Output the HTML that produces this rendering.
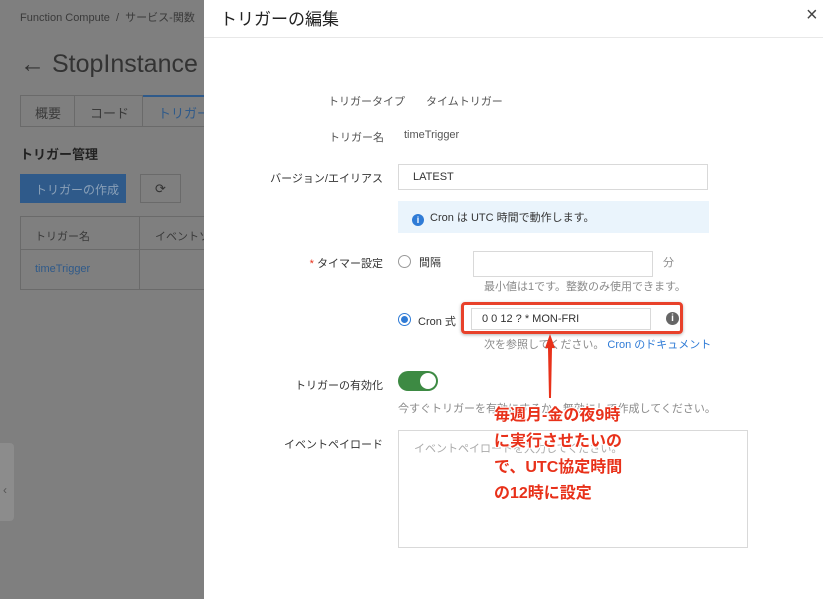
<!DOCTYPE html>
<html><head><meta charset="utf-8"><style>
*{box-sizing:border-box;margin:0;padding:0}
body{width:823px;height:599px;overflow:hidden;position:relative;background:#7f7f7f;font-family:"Liberation Sans","Noto Sans CJK JP",sans-serif;font-size:12px;color:#333}
.a{position:absolute;white-space:nowrap}
.bg{color:#3a3a3a}
.dr{position:absolute;left:204px;top:0;width:619px;height:599px;background:#fff}
.lbl{position:absolute;right:440px;color:#333;font-size:11px;text-align:right;white-space:nowrap}
.inp{position:absolute;border:1px solid #d9d9d9;background:#fff;height:26px;font-size:11px;padding:6px 14px;color:#333}
.gray{color:#8a8a8a;font-size:11px}
.red{color:#e8311a;font-weight:bold;font-size:15px;text-shadow:-1px -1px 0 #fff,1px -1px 0 #fff,-1px 1px 0 #fff,1px 1px 0 #fff,0 0 2px #fff;line-height:26px}
</style></head><body>
<div class="a bg" style="left:20px;top:9px;font-size:11px">Function Compute&nbsp; / &nbsp;サービス-関数</div>
<div class="a bg" style="left:20px;top:50px;font-size:25px;color:#333">← StopInstance</div>
<div class="a" style="left:20px;top:95px;width:185px;height:32px;border:1px solid #6a6a6a;border-right:none"></div>
<div class="a" style="left:74px;top:95px;width:1px;height:32px;background:#6a6a6a"></div>
<div class="a" style="left:142px;top:95px;width:1px;height:32px;background:#6a6a6a"></div>
<div class="a" style="left:143px;top:95px;width:62px;height:2px;background:#2f5a8a"></div>
<div class="a bg" style="left:35px;top:103px;font-size:13px">概要</div>
<div class="a bg" style="left:90px;top:103px;font-size:13px">コード</div>
<div class="a" style="left:158px;top:103px;font-size:13px;color:#2f5a8a">トリガー</div>
<div class="a" style="left:20px;top:144px;font-size:13px;font-weight:bold;color:#222">トリガー管理</div>
<div class="a" style="left:20px;top:174px;width:106px;height:29px;background:#2f5a8a;color:#8aa0b8;font-size:12px;padding:7px 15px">トリガーの作成</div>
<div class="a" style="left:140px;top:174px;width:41px;height:29px;border:1px solid #6a6a6a;text-align:center;padding-top:6px;font-size:13px;color:#333">⟳</div>
<div class="a" style="left:20px;top:216px;width:190px;height:74px;border:1px solid #6a6a6a"></div>
<div class="a" style="left:20px;top:249px;width:190px;height:1px;background:#6a6a6a"></div>
<div class="a" style="left:139px;top:216px;width:1px;height:74px;background:#6a6a6a"></div>
<div class="a bg" style="left:35px;top:228px;font-size:11px">トリガー名</div>
<div class="a bg" style="left:155px;top:228px;font-size:11px">イベントソ</div>
<div class="a" style="left:35px;top:263px;font-size:11px;color:#2f5a8a">timeTrigger</div>
<div class="a" style="left:0;top:443px;width:14px;height:78px;background:#8c8c8c;border-radius:0 4px 4px 0;color:#555;font-size:12px;padding:40px 0 0 3px">‹</div>

<div class="dr">
<div class="a" style="left:16px;top:5px;font-size:17px;color:#222">トリガーの編集</div>
<div class="a" style="left:602px;top:4px;font-size:20px;color:#444">×</div>
<div class="a" style="left:0;top:37px;width:619px;height:1px;background:#e8e8e8"></div>
</div>
<div class="a" style="left:328px;top:93px;font-size:11px;color:#555">トリガータイプ</div>
<div class="a" style="left:426px;top:93px;font-size:11px;color:#555">タイムトリガー</div>
<div class="a" style="left:329px;top:129px;font-size:11px;color:#555">トリガー名</div>
<div class="a" style="left:404px;top:129px;font-size:11px;color:#555">timeTrigger</div>
<div class="lbl" style="top:170px">バージョン/エイリアス</div>
<div class="inp" style="left:398px;top:164px;width:310px">LATEST</div>
<div class="a" style="left:398px;top:201px;width:311px;height:32px;background:#eaf4fc;font-size:11px;padding:8px 14px;color:#333"><span style="display:inline-block;width:12px;height:12px;border-radius:50%;background:#2f7bd6;color:#fff;font-size:9px;text-align:center;line-height:12px;font-weight:bold;margin-right:6px;vertical-align:-2px">i</span>Cron は UTC 時間で動作します。</div>
<div class="lbl" style="top:255px"><span style="color:#e8311a">* </span>タイマー設定</div>
<div class="a" style="left:398px;top:255px;width:13px;height:13px;border:1px solid #999;border-radius:50%"></div>
<div class="a" style="left:419px;top:254px;font-size:11px">間隔</div>
<div class="inp" style="left:473px;top:251px;width:180px"></div>
<div class="a gray" style="left:663px;top:254px">分</div>
<div class="a gray" style="left:484px;top:278px">最小値は1です。整数のみ使用できます。</div>
<div class="a" style="left:398px;top:313px;width:13px;height:13px;border:1px solid #2f7bd6;border-radius:50%"><div style="margin:2px;width:7px;height:7px;border-radius:50%;background:#2f7bd6"></div></div>
<div class="a" style="left:418px;top:313px;font-size:11px">Cron 式</div>
<div class="a" style="left:461px;top:302px;width:222px;height:32px;border:3px solid #e8412a;border-radius:4px;box-shadow:0 1px 3px rgba(0,0,0,.3)"></div>
<div class="inp" style="left:471px;top:308px;width:180px;height:22px;padding:4px 10px">0 0 12 ? * MON-FRI</div>
<div class="a" style="left:666px;top:312px;width:13px;height:13px;border-radius:50%;background:#666;color:#fff;font-size:10px;font-weight:bold;text-align:center;line-height:13px">i</div>
<div class="a gray" style="left:484px;top:336px">次を参照してください。 <span style="color:#2f7bd6">Cron のドキュメント</span></div>
<div class="lbl" style="top:377px">トリガーの有効化</div>
<div class="a" style="left:398px;top:371px;width:40px;height:20px;border-radius:10px;background:#3d8a43"><div style="position:absolute;right:2px;top:2px;width:16px;height:16px;border-radius:50%;background:#fff"></div></div>
<div class="a gray" style="left:398px;top:400px">今すぐトリガーを有効にするか、無効にして作成してください。</div>
<div class="lbl" style="top:436px">イベントペイロード</div>
<div class="a" style="left:398px;top:430px;width:350px;height:118px;border:1px solid #d9d9d9"></div>
<div class="a" style="left:414px;top:440px;font-size:11px;color:#aaa">イベントペイロードを入力してください。</div>
<div class="a" style="left:545px;top:334px;width:10px;height:64px;background:#e8311a;clip-path:polygon(50% 0,100% 22%,70% 22%,60% 100%,40% 100%,30% 22%,0 22%)"></div>
<div class="a red" style="left:494px;top:403px;font-size:16px">毎週月-金の夜9時<br>に実行させたいの<br>で、UTC協定時間<br>の12時に設定</div>
</body></html>
